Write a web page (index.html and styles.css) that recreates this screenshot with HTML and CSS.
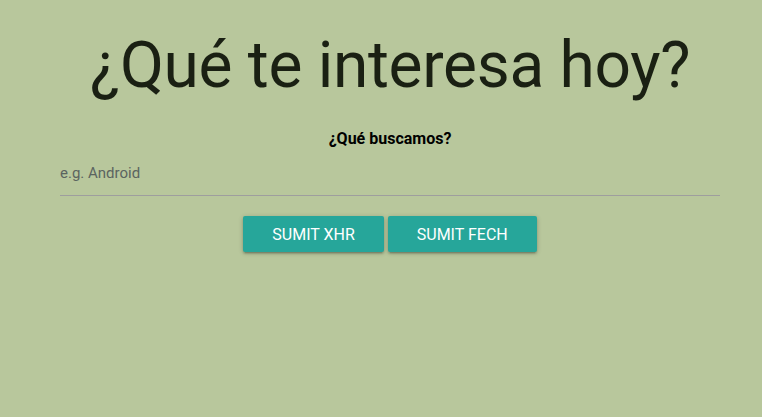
FILE: index.html
```html
<!DOCTYPE html>
<html lang="es">
<head>
<meta charset="utf-8">
<link rel="stylesheet" href="styles.css">
</head>
<body>
<main class="container">
  <h1 class="title">¿Qué te interesa hoy?</h1>
  <form class="search">
    <label class="label" for="q">¿Qué buscamos?</label>
    <input class="field" id="q" type="text" placeholder="e.g. Android">
    <div class="actions">
      <button type="button" class="btn">Sumit XHR</button>
      <button type="button" class="btn">Sumit Fech</button>
    </div>
  </form>
</main>
</body>
</html>
```
FILE: styles.css
```css
html, body {
  margin: 0;
  padding: 0;
}
body {
  background: #b8c79c;
  font-family: Roboto, "Liberation Sans", sans-serif;
  color: rgba(0,0,0,0.87);
  height: 417px;
}
.container {
  width: 660px;
  margin: 0 0 0 60px;
  display: flex;
  flex-direction: column;
}
.title {
  font-weight: 400;
  font-size: 64px;
  line-height: 1.1;
  letter-spacing: -0.3px;
  margin: 31px 0 0;
  text-align: center;
  color: #1a2013;
}
.search {
  display: flex;
  flex-direction: column;
}
.label {
  margin-top: 28px;
  text-align: center;
  font-weight: 700;
  font-size: 16px;
  color: #000;
}
.field {
  margin-top: 3px;
  background: transparent;
  border: none;
  border-bottom: 1px solid #9e9e9e;
  height: 44px;
  padding: 0;
  font-family: inherit;
  font-size: 15px;
  outline: none;
}
.field::placeholder {
  color: #5b6460;
}
.actions {
  margin-top: 20px;
  display: flex;
  justify-content: center;
  gap: 4px;
}
.btn {
  height: 36px;
  padding: 0 29px;
  border: none;
  border-radius: 2px;
  background: #26a69a;
  color: #fff;
  font-family: inherit;
  font-size: 16px;
  text-transform: uppercase;
  box-shadow: 0 2px 2px 0 rgba(0,0,0,0.14), 0 3px 1px -2px rgba(0,0,0,0.12), 0 1px 5px 0 rgba(0,0,0,0.2);
}
```
